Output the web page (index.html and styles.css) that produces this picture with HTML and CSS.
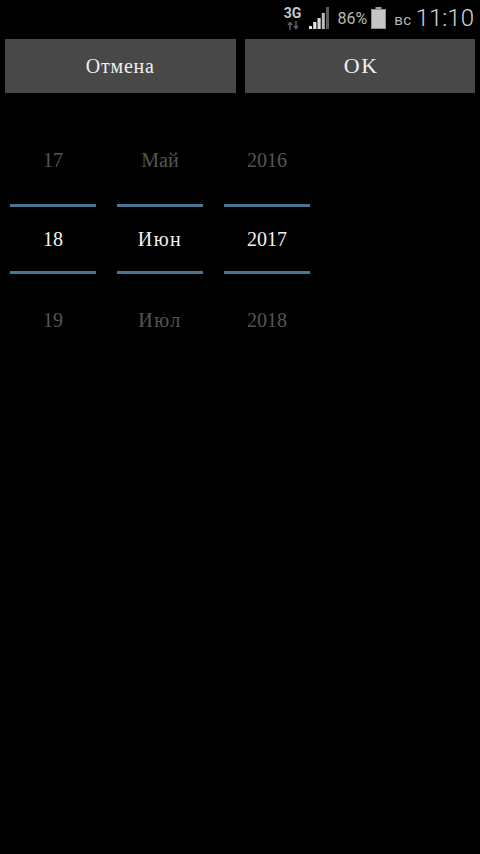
FILE: index.html
```html
<!DOCTYPE html>
<html lang="ru">

<head>
    <meta charset="UTF-8">
    <meta name="viewport" content="width=device-width, initial-scale=1.0">
    <title>Дата</title>
    <link rel="stylesheet" href="styles.css">
</head>

<body>
    <div class="status">
        <div class="net">
            <span class="net-label">3G</span>
            <svg class="net-arrows" width="14" height="9" viewBox="0 0 14 9">
                <path d="M4 9V2M2 4l2-2.500 2 2.500" fill="none" stroke="#5e5e5e" stroke-width="1.500"/>
                <path d="M10 0v7M8 5l2 2.500 2-2.500" fill="none" stroke="#5e5e5e" stroke-width="1.500"/>
            </svg>
        </div>
        <svg class="signal" width="20" height="22" viewBox="0 0 20 22">
            <path d="M0 22v-3h3V22z" fill="#e6e6e6"/>
            <path d="M4.200 22v-7h3.200v7z" fill="#e6e6e6"/>
            <path d="M8.500 22V11h3.200v11z" fill="#d8d8d8"/>
            <path d="M12.800 22V6h3v16z" fill="#bdbdbd"/>
            <path d="M17 22V0h3v22z" fill="#5c5c5c"/>
        </svg>
        <span class="percent">86%</span>
        <svg class="battery" width="15" height="22" viewBox="0 0 15 22">
            <rect x="4.500" y="0" width="6" height="3" fill="#a0a0a0"/>
            <rect x="0.500" y="2.500" width="14" height="19" fill="#c6c6c6" stroke="#8e8e8e"/>
        </svg>
        <span class="day">вс</span>
        <span class="clock">11:10</span>
    </div>

    <div class="buttons">
        <div class="btn">Отмена</div>
        <div class="btn btn-ok">OK</div>
    </div>

    <div class="picker">
        <div class="col">
            <div class="item">17</div>
            <div class="item current">18</div>
            <div class="item">19</div>
        </div>
        <div class="col">
            <div class="item">Май</div>
            <div class="item current wide">Июн</div>
            <div class="item wide">Июл</div>
        </div>
        <div class="col">
            <div class="item">2016</div>
            <div class="item current">2017</div>
            <div class="item">2018</div>
        </div>
    </div>
</body>

</html>
```

FILE: styles.css
```css
* {
    box-sizing: border-box;
}

body {
    margin: 0;
    width: 480px;
    height: 854px;
    overflow: hidden;
    background-color: #000;
    font-family: "Liberation Serif", serif;
}

.status {
    display: flex;
    justify-content: flex-end;
    align-items: center;
    height: 36px;
    padding: 0 6px 0 0;
    font-family: "Roboto", sans-serif;
    color: #b8b8b8;
}

.net {
    display: flex;
    flex-direction: column;
    align-items: center;
    width: 18px;
    margin: 0 7px 0 0;
}

.net-label {
    font-size: 14px;
    font-weight: 700;
    line-height: 15px;
    color: #c8c8c8;
}

.signal {
    margin-right: 9px;
}

.percent {
    font-size: 16px;
    margin-right: 4px;
}

.battery {
    margin-right: 8px;
}

.day {
    font-size: 15px;
    letter-spacing: 0.5px;
    margin: 3px 4px 0 0;
}

.clock {
    font-size: 24px;
    font-weight: 300;
    color: #d2d2d2;
}

.buttons {
    display: flex;
    gap: 9px;
    padding: 3px 5px 0;
}

.btn {
    flex: 1;
    height: 54px;
    display: flex;
    justify-content: center;
    align-items: center;
    background-color: #484848;
    color: #f0f0f0;
    font-size: 20px;
    letter-spacing: 0.8px;
}

.btn-ok {
    text-indent: 3px;
    font-size: 22px;
    letter-spacing: 1.5px;
}

.picker {
    display: flex;
    gap: 21px;
    padding: 27px 0 0 10px;
}

.col {
    width: 86px;
}

.item {
    height: 80px;
    display: flex;
    justify-content: center;
    align-items: center;
    color: #555;
    font-size: 20px;
}

.wide {
    letter-spacing: 1.5px;
}

.current {
    height: 70px;
    margin: 4px 0 6px;
    border-top: 3px solid #4a7692;
    border-bottom: 3px solid #4a7692;
    color: #f2f2f2;
}
```
